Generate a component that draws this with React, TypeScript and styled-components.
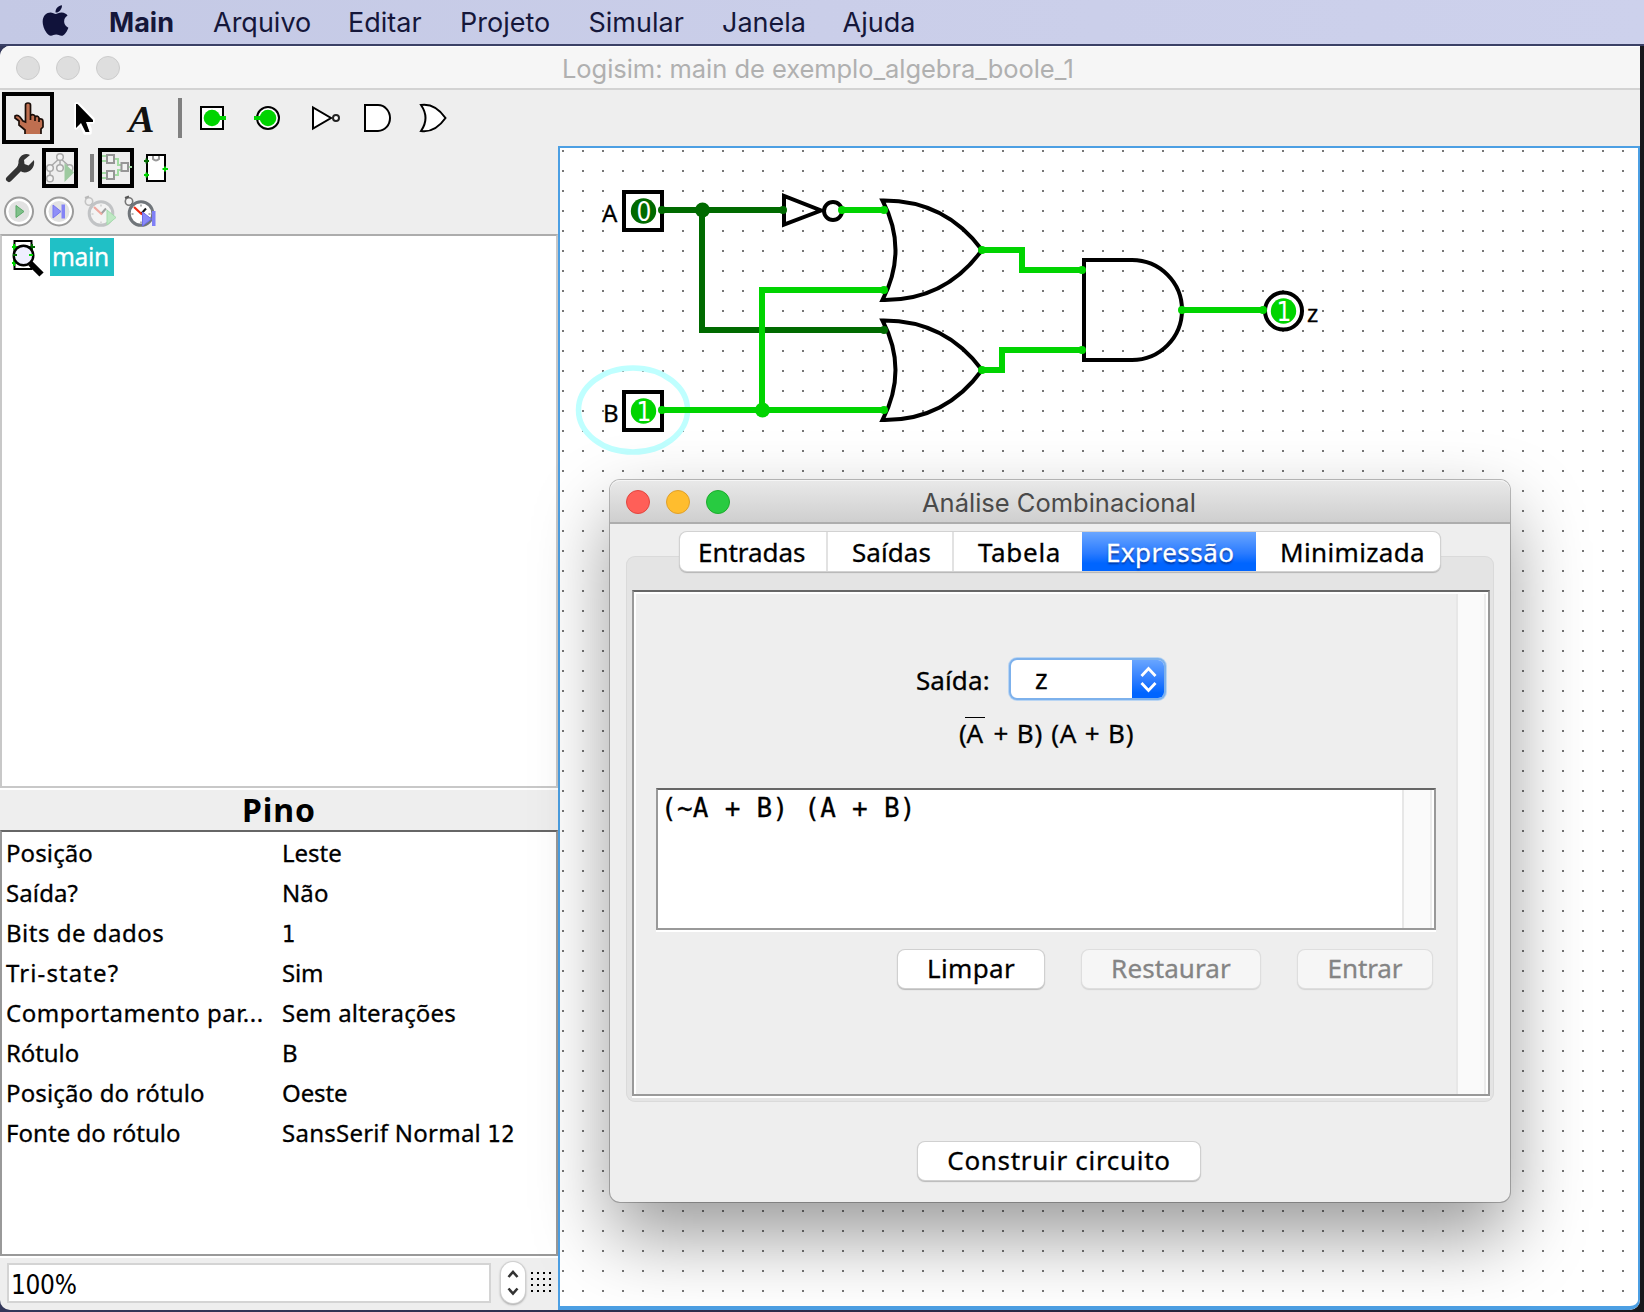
import React from "react";
import styled, { createGlobalStyle, css } from "styled-components";
import { FaApple } from "react-icons/fa";

const sans = `"Noto Sans", "Open Sans", sans-serif`;
const system = `Inter, Roboto, sans-serif`;
const condensed = `"DejaVu Sans Condensed", "DejaVu Sans", sans-serif`;

const GlobalStyle = createGlobalStyle`
  * { box-sizing: border-box; }
  html, body { margin: 0; padding: 0; }
  body { width: 1644px; height: 1312px; overflow: hidden; background: #1b1a24; }
`;

const Desktop = styled.div`
  position: relative;
  display: flex;
  flex-direction: column;
  width: 1644px;
  height: 1312px;
  overflow: hidden;
  background: linear-gradient(90deg, #33375a 0%, #2b2a48 60%, #1c1b26 97%, #17171b 100%);
  font-family: ${sans};
  color: #000;
  white-space: pre;
`;

/* ---------- menu bar ---------- */

const MenuBar = styled.nav`
  display: flex;
  align-items: center;
  height: 44px;
  flex: none;
  padding-left: 41px;
  padding-top: 1px;
  background: linear-gradient(90deg, #c4c9e5, #cacee9 50%, #cdd1ec);
  color: #15173a;
  font-family: ${system};
  font-size: 27px;
  line-height: 44px;
`;

const MenuShade = styled.i`
  flex: none;
  height: 2px;
  background: #3b4166;
`;

const AppleSlot = styled.span<{ $w: number }>`
  display: flex;
  width: ${(p) => p.$w}px;
  margin-top: -5px;
  margin-left: -3px;
  font-size: 35px;
  color: #10123a;
`;

const MenuItem = styled.span<{ $w: number; $bold?: boolean }>`
  width: ${(p) => p.$w}px;
  font-weight: ${(p) => (p.$bold ? 700 : 400)};
`;

/* ---------- main window ---------- */

const MainWindow = styled.section`
  display: flex;
  flex-direction: column;
  width: 1640px;
  height: 1264px;
  background: #eeeeee;
  border-radius: 10px 0 10px 10px;
  overflow: hidden;
`;

const MainTitle = styled.header`
  display: flex;
  align-items: center;
  flex: none;
  height: 44px;
  padding-left: 16px;
  background: #f6f6f6;
  border-bottom: 2px solid #d3d3d3;
  border-top: 1px solid #fff;
`;

const Light = styled.i<{ $fill: string; $edge: string }>`
  width: 24px;
  height: 24px;
  margin-right: 16px;
  border-radius: 50%;
  background: ${(p) => p.$fill};
  border: 1px solid ${(p) => p.$edge};
`;

const MainTitleText = styled.h1`
  flex: 1;
  margin: 0;
  padding: 2px 0 0 426px;
  font: 400 25.5px/40px ${system};
  letter-spacing: -0.05px;
  color: #b0b0b0;
`;

const ToolBar = styled.div`
  display: flex;
  flex: none;
  height: 56px;
`;

const Divider = styled.i<{ $w: number; $h: number; $left: number }>`
  display: block;
  width: ${(p) => p.$w}px;
  height: ${(p) => p.$h}px;
  padding-left: ${(p) => p.$left}px;
  margin-top: 8px;
  &::after { content: ""; display: block; width: 4px; height: 100%; background: #808080; }
`;

const Split = styled.div`
  display: flex;
  flex: 1;
  min-height: 0;
`;

const Explorer = styled.aside`
  display: flex;
  flex-direction: column;
  width: 558px;
`;

const SmallBar = styled.div`
  display: flex;
  height: 44px;
  flex: none;
`;

const Tree = styled.div`
  flex: none;
  height: 554px;
  border: 2px solid #c8c8c8;
  border-top-color: #acacac;
  background: #fff;
`;

const TreeNode = styled.div`
  display: flex;
  height: 42px;
`;

const TreeLabel = styled.span`
  height: 38px;
  margin-top: 2px;
  width: 64px;
  padding-left: 2px;
  background: #20c0c6;
  color: #fff;
  font-size: 24.5px;
  line-height: 38px;
  letter-spacing: -0.3px;
  -webkit-text-stroke: 0.3px;
`;

const AttrTitle = styled.h2`
  flex: none;
  height: 42px;
  margin: 0;
  border-top: 2px solid #fff;
  font: 700 32px/40px ${sans};
  letter-spacing: 1px;
  text-align: center;
`;

const AttrTable = styled.div`
  flex: none;
  height: 426px;
  padding-top: 1px;
  border: 2px solid #999;
  border-top-color: #666;
  background: #fff;
`;

const AttrRow = styled.div`
  display: grid;
  grid-template-columns: 276px 1fr;
  height: 40px;
  padding-left: 4px;
  font-size: 24px;
  line-height: 40px;
  -webkit-text-stroke: 0.3px;
`;

const Cell = styled.span<{ $ls: number }>`
  letter-spacing: ${(p) => p.$ls}px;
`;

const Digits = styled.span`
  font-family: ${condensed};
  font-stretch: condensed;
  font-size: 0.98em;
`;

const StatusBar = styled.footer`
  display: flex;
  flex: 1;
  align-items: flex-start;
  padding: 5px 0 0 7px;
  border-top: 2px solid #fff;
`;

const ZoomField = styled.div`
  width: 484px;
  height: 40px;
  border: 2px solid #d4d4d4;
  background: #fff;
  padding-left: 2px;
  font-size: 26.5px;
  line-height: 39px;
  letter-spacing: -0.3px;
`;

const Stepper = styled.div`
  width: 24px;
  height: 41px;
  margin: -1px 0 0 10px;
  border-radius: 12px;
  background: #fff;
  box-shadow: 0 0 0 1px #d0d0d0, 0 1px 2px 1px #aaa;
`;

const GridButton = styled.svg`
  margin: 9px 0 0 6px;
`;

const CanvasFrame = styled.main`
  flex: 1;
  border: 2px solid #4c9fe3;
  border-bottom-width: 4px;
  border-radius: 0 0 10px 0;
  background: #fff;
  svg { display: block; }
`;

/* ---------- analysis dialog ---------- */

const Dialog = styled.section`
  position: absolute;
  left: 610px;
  top: 480px;
  display: flex;
  flex-direction: column;
  width: 900px;
  height: 722px;
  border-radius: 10px;
  background: #eeeeee;
  box-shadow: 0 0 0 1px rgba(0, 0, 0, 0.25), 0 34px 76px rgba(0, 0, 0, 0.4);
`;

const DialogTitle = styled.header`
  display: flex;
  align-items: center;
  flex: none;
  height: 44px;
  padding: 2px 0 0 16px;
  border-radius: 10px 10px 0 0;
  border-bottom: 2px solid #adadad;
  background: linear-gradient(#e9e9e9, #cfcfcf);
  box-shadow: inset 0 1px 0 #f6f6f6;
`;

const DialogTitleText = styled.h2`
  margin: 0;
  padding: 1px 0 0 176px;
  font: 400 25.5px/38px ${system};
  color: #4a4a4a;
`;

const Tabs = styled.div`
  position: relative;
  z-index: 1;
  display: flex;
  flex: none;
  align-self: center;
  width: 760px;
  height: 39px;
  margin: 8px 0 1px;
  border-radius: 7px;
  background: #fff;
  box-shadow: 0 0 0 1px #d2d2d2, 0 1px 1px 1px #b4b4b4;
`;

const Tab = styled.span<{ $w: number; $pad: number; $ls: number; $active?: boolean }>`
  width: ${(p) => p.$w}px;
  padding-left: ${(p) => p.$pad}px;
  font-size: 26px;
  line-height: 40px;
  letter-spacing: ${(p) => p.$ls}px;
  -webkit-text-stroke: 0.3px;
  border-left: 2px solid #e2e2e2;
  &:first-child, &:last-child { border-left-color: transparent; }
  ${(p) =>
    p.$active &&
    css`
      border-left-color: transparent;
      color: #fff;
      background: linear-gradient(#6aa6ff, #2a7bff 55%, #0065ff 80%) border-box;
      text-shadow: 0 2px 2px rgba(0, 20, 90, 0.6);
    `}
`;

const TabPanel = styled.div`
  flex: none;
  height: 546px;
  margin: -16px 16px 0;
  padding: 34px 4px 0 6px;
  border-radius: 9px;
  background: #e4e4e4;
  box-shadow: inset 0 0 0 1px #dadada;
`;

const ScrollBox = styled.div`
  display: flex;
  height: 506px;
  border: 2px solid #999;
  border-top-color: #666;
  background: #eeeeee;
  box-shadow: inset 2px 2px 0 #fff, 0 2px 0 #fff;
`;

const Track = styled.i<{ $top: number }>`
  width: 32px;
  flex: none;
  margin-top: ${(p) => p.$top}px;
  border-left: 2px solid #e7e7e7;
  border-right: 2px solid #fff;
  background: linear-gradient(90deg, #fafafa 26px, #ececec 26px);
`;

const Form = styled.div`
  display: flex;
  flex-direction: column;
  flex: 1;
  padding: 66px 20px 0 22px;
`;

const OutputRow = styled.div`
  display: flex;
  height: 42px;
  padding-left: 260px;
  font-size: 26px;
  line-height: 44px;
  -webkit-text-stroke: 0.3px;
`;

const OutputLabel = styled.span`
  width: 93px;
  letter-spacing: 0.1px;
`;

const Combo = styled.div`
  display: flex;
  width: 157px;
  height: 42px;
  overflow: hidden;
  border: 2px solid #7db1ec;
  border-radius: 8px;
  background: #fff;
  box-shadow: 0 0 0 1px #b9d5f3;
  line-height: 38px;
`;

const ComboValue = styled.span`
  flex: 1;
  padding-left: 24px;
  font-size: 27px;
`;

const ComboArrows = styled.span`
  display: flex;
  width: 33px;
  margin: -1px -1px -1px 0;
  background: linear-gradient(#6ba7ff, #2a7bff 55%, #0065ff 85%);
`;

const Formula = styled.div`
  height: 74px;
  margin-top: 14px;
  padding-left: 303px;
  font-size: 26px;
  line-height: 39px;
  -webkit-text-stroke: 0.3px;
`;

const Term = styled.span<{ $gap?: number }>`
  letter-spacing: 0.8px;
  margin-left: ${(p) => p.$gap ?? 0}px;
`;

const Negated = styled.span`
  position: relative;
  margin-left: -1px;
  margin-right: 2px;
  &::before {
    content: "";
    position: absolute;
    left: -2px;
    top: 2px;
    width: 20px;
    height: 1px;
    background: #000;
  }
`;

const Editor = styled.div`
  display: flex;
  flex: none;
  height: 142px;
  border: 2px solid #999;
  border-top-color: #666;
  background: #fff;
  box-shadow: 0 2px 0 #fff;
`;

const EditorText = styled.div`
  flex: 1;
  padding-left: 3px;
  font: 26px/37px "DejaVu Sans Mono", "Liberation Mono", monospace;
  letter-spacing: 0.27px;
  -webkit-text-stroke: 0.3px;
`;

const Actions = styled.div`
  display: flex;
  justify-content: flex-end;
  gap: 38px;
  margin: 20px 4px 0 0;
`;

const Button = styled.button<{ $w: number; $ls: number }>`
  width: ${(p) => p.$w}px;
  height: 38px;
  padding: 0;
  border: 0;
  border-radius: 7px;
  background: #fff;
  box-shadow: 0 0 0 1px #d0d0d0, 0 1px 1px 1px #b8b8b8;
  font: 26px/36px ${sans};
  letter-spacing: ${(p) => p.$ls}px;
  -webkit-text-stroke: 0.3px;
  color: #000;
  span { display: block; margin-top: -3px; }
  &:disabled {
    color: #848484;
    background: #f6f6f6;
    box-shadow: 0 0 0 1px #dedede, 0 1px 1px 1px #d4d4d4;
  }
`;

const DialogFooter = styled.footer`
  display: flex;
  justify-content: center;
  padding: 40px 2px 0 0;
`;

/* ---------- toolbar drawings ---------- */

const ON = "#00d400";
const OFF = "#006a00";

const Tool = ({ selected, children }: { selected?: boolean; children: React.ReactNode }) => (
  <svg width="56" height="56" viewBox="0 0 56 56">
    {selected && <rect x="4" y="4" width="48" height="48" fill="none" stroke="#000" strokeWidth="4" />}
    {children}
  </svg>
);

const SmallTool = ({ selected, children }: { selected?: boolean; children: React.ReactNode }) => (
  <svg width="40" height="44" viewBox="0 0 40 44">
    {selected && <rect x="4" y="4" width="32" height="36" fill="none" stroke="#000" strokeWidth="4" />}
    {children}
  </svg>
);

const MainTools = () => (
  <ToolBar>
    <Tool selected>
      <path
        d="M25.500 32V15Q25.500 13 28 13Q30.500 13 30.500 15V25Q32 23.500 34.500 25L35.500 27Q37.500 25 39 27L40 29Q42.500 28.500 43 31V37L41 39V44H25V40L19 35V31L15 28V26Q17.500 24.500 20 27L23 31Z"
        fill="#bf6f50"
      />
      <path
        d="M25 44V40L19 35V31L15 28V26Q17.500 24.500 20 27L23 31L25.500 32V15Q25.500 13 28 13Q30.500 13 30.500 15V30M30.500 25.500Q33 23.500 35 26V31M35 27Q38 25 39 28V32M39 29Q43 28 43 32V37L41 39V44"
        fill="none"
        stroke="#1a0d08"
        strokeWidth="1.700"
      />
    </Tool>
    <Tool>
      <path
        d="M20 14V38L25 34L29 43H34V39L31 32H37V29L22 14Z"
        fill="#000"
        stroke="#fff"
        strokeWidth="3.500"
        strokeLinejoin="round"
      />
      <path d="M20 14V38L25 33L29.500 42H33.500L30 32H37V30L21.500 14Z" fill="#000" />
    </Tool>
    <Tool>
      <text x="29.500" y="42" textAnchor="middle" fontFamily="Liberation Serif, serif" fontStyle="italic" fontWeight="700" fontSize="38" fill="#111" textLength="26" lengthAdjust="spacingAndGlyphs">
        A
      </text>
    </Tool>
    <Divider $w={16} $h={40} $left={10} />
    <Tool>
      <rect x="17" y="17" width="22" height="22" fill="#fff" stroke="#000" strokeWidth="2" />
      <rect x="30" y="26" width="12" height="4" fill={ON} />
      <circle cx="28" cy="28" r="8.300" fill={ON} />
    </Tool>
    <Tool>
      <circle cx="28" cy="28" r="11" fill="#fff" stroke="#000" strokeWidth="2" />
      <rect x="14" y="26" width="10" height="4" fill={ON} />
      <circle cx="28" cy="28" r="8.300" fill={ON} />
    </Tool>
    <Tool>
      <path d="M17 17.500V38.500L35 28Z" fill="#fff" stroke="#000" strokeWidth="2" />
      <circle cx="40" cy="28" r="3" fill="#fff" stroke="#222" strokeWidth="2" />
    </Tool>
    <Tool>
      <path d="M13 15H26A12 13 0 0 1 26 41H13Z" fill="#fff" stroke="#000" strokeWidth="2" />
    </Tool>
    <Tool>
      <path d="M13 15Q27 13 37.500 28Q27 43 13 41Q22 28 13 15Z" fill="#fff" stroke="#000" strokeWidth="2" />
    </Tool>
  </ToolBar>
);

const ProjectTools = () => (
  <SmallBar>
    <SmallTool>
      <path d="M9 33L21 21" stroke="#333" strokeWidth="6" strokeLinecap="round" />
      <path
        d="M30 9C24 6 18 11 18.500 17L17 22L22 26C28 28 35.500 23 34 14L28.500 19.500L24.500 18L24 14Z"
        fill="#333"
      />
    </SmallTool>
    <SmallTool selected>
      <g fill="#f4f4f4" stroke="#aaa" strokeWidth="1.500">
        <path d="M20 12L10 21M20 12V21M20 12L30 21M10 22V33" />
        <circle cx="20" cy="11" r="3.300" />
        <circle cx="10" cy="22" r="3.300" />
        <circle cx="20" cy="22" r="3.300" />
        <circle cx="29.500" cy="22" r="3.300" />
        <circle cx="10" cy="32.500" r="3.300" />
      </g>
      <path d="M24.500 17V36L34 26.500Z" fill="#9dcaa0" />
    </SmallTool>
    <Divider $w={16} $h={28} $left={10} />
    <SmallTool selected>
      <path d="M6 10H11M6 15H11M6 27H11M6 32H11M18 13H22V19H26M18 29H22V24H26M33 21H36" stroke="#a3dba3" strokeWidth="2" fill="none" />
      <g fill="#f2f2f2" stroke="#969696" strokeWidth="2">
        <rect x="11" y="9" width="7" height="8" />
        <rect x="11" y="25" width="7" height="8" />
        <rect x="25.500" y="17" width="6.500" height="8" />
      </g>
    </SmallTool>
    <SmallTool>
      <rect x="11" y="9" width="18" height="26" fill="#fff" stroke="#000" strokeWidth="2" />
      <path d="M17 10V13Q20 16 23 13V10" fill="none" stroke="#999" strokeWidth="2" />
      <path d="M8 15H13M10.500 12.500V17.500" stroke={OFF} strokeWidth="2" />
      <path d="M8 29H13M10.500 26.500V31.500M26.500 23H32M29 20.500V25.500" stroke={ON} strokeWidth="2" />
    </SmallTool>
  </SmallBar>
);

const Dial = () => (
  <>
    <circle cx="19" cy="21.500" r="14" fill="#fff" stroke="#9c9c9c" strokeWidth="2" />
    <circle cx="19" cy="21.500" r="10.500" fill="#e2e2e2" />
  </>
);

const StopWatch = () => (
  <>
    <circle cx="9" cy="11.500" r="3.700" fill="#f2f2f2" stroke="#777" strokeWidth="1.600" />
    <path d="M5 8L9 6.500M11 14L14 16" stroke="#555" strokeWidth="2" />
    <circle cx="21" cy="23.500" r="11.800" fill="#fff" stroke="#70757a" strokeWidth="3" />
    <path d="M21 14.500V16.500M21 31.500V33.500M11.500 24H13.500M28.500 24H30.500" stroke="#999" strokeWidth="1.500" />
    <path d="M21 24L26 18.500" stroke="#111" strokeWidth="2" />
    <path d="M14 17L22 24.500" stroke="#f02a10" strokeWidth="2.200" />
  </>
);

const SimulationTools = () => (
  <SmallBar>
    <SmallTool>
      <Dial />
      <path d="M16 15.500V27.500L24 21.500Z" fill="#7fc08a" stroke="#5aa868" strokeWidth="1" />
    </SmallTool>
    <SmallTool>
      <Dial />
      <path d="M13 15V28L21 21.500Z" fill="#8f8ff8" stroke="#7676f0" strokeWidth="1" />
      <rect x="21.500" y="14.500" width="3.500" height="14" fill="#8484f6" />
    </SmallTool>
    <SmallTool>
      <g opacity="0.350">
        <StopWatch />
      </g>
      <path d="M27 20V35L36 27.500Z" fill="#bfe8c4" stroke="#a5dcac" strokeWidth="1" />
    </SmallTool>
    <SmallTool>
      <StopWatch />
      <path d="M22.500 22V36L31.500 29Z" fill="#8a8af8" stroke="#6c6cec" strokeWidth="1" />
      <rect x="32" y="21" width="3.500" height="15" fill="#7f7ff6" />
    </SmallTool>
  </SmallBar>
);

const CircuitIcon = () => (
  <svg width="48" height="42" viewBox="2 236 48 42">
    <rect x="14.500" y="241" width="17" height="28" fill="#fff" stroke="#000" strokeWidth="2" />
    <path d="M12 247H18M14 244V250M12 263H17M14 260V266" stroke={ON} strokeWidth="2" />
    <path d="M29 247H35M32 244V250" stroke={OFF} strokeWidth="2" />
    <circle cx="23.500" cy="255.500" r="9.800" fill="#efefff" stroke="#000" strokeWidth="2.400" />
    <path d="M29 255H33" stroke={ON} strokeWidth="2" />
    <path d="M13 255H17" stroke={OFF} strokeWidth="2" />
    <path d="M30.500 263.500L41.500 274.500" stroke="#000" strokeWidth="6" />
  </svg>
);

/* ---------- circuit ---------- */

const Label = styled.text`
  font-family: ${sans};
  font-size: 24px;
  fill: #000;
  stroke: #000;
  stroke-width: 0.3px;
`;

const PinValue = styled.text`
  font-family: ${condensed};
  font-stretch: condensed;
  font-size: 26px;
  fill: #fff;
  text-anchor: middle;
`;

const OrGate = ({ y }: { y: number }) => (
  <path
    d={`M882.500 ${y + 0.5}Q945 ${y} 982 ${y + 50}Q945 ${y + 101} 882.500 ${y + 100}Q908.500 ${y + 50} 882.500 ${y + 0.5}Z`}
    fill="none"
    stroke="#000"
    strokeWidth="4"
  />
);

const InputPin = ({ y, label, value, color }: { y: number; label: string; value: string; color: string }) => (
  <>
    <rect x="624" y={y - 18} width="38" height="38" fill="#fff" stroke="#000" strokeWidth="4" />
    <circle cx="643.500" cy={y + 1} r="12.700" fill={color} />
    <PinValue x="644" y={y + 11}>{value}</PinValue>
    <Label x={label === "A" ? 602 : 603} y={y + 12}>{label}</Label>
  </>
);

const wires: { d: string; on: boolean }[] = [
  { on: false, d: "M662 210H786M702 210V330H884" },
  { on: true, d: "M842 210H884" },
  { on: true, d: "M662 410H884M762 410V290H884" },
  { on: true, d: "M982 250H1022V270H1083" },
  { on: true, d: "M982 370H1002V350H1083" },
  { on: true, d: "M1181 310H1264" },
];

const ends: [number, number, boolean][] = [
  [662, 210, false], [783, 210, false], [842, 210, true], [884, 210, true], [884, 290, true],
  [884, 330, false], [662, 410, true], [884, 410, true], [982, 250, true], [982, 370, true],
  [1082, 270, true], [1082, 350, true], [1182, 310, true], [1263, 310, true],
];

const Circuit = () => (
  <svg width="1078" height="1158" viewBox="560 148 1078 1158">
    <defs>
      <pattern id="grid" x="562" y="150" width="20" height="20" patternUnits="userSpaceOnUse">
        <rect width="2" height="2" fill="#777" />
      </pattern>
    </defs>
    <rect x="560" y="148" width="1078" height="1158" fill="url(#grid)" />
    <ellipse cx="633" cy="410" rx="54.500" ry="42" fill="none" stroke="#bfffff" strokeWidth="5.500" />
    <InputPin y={210} label="A" value="0" color={OFF} />
    <InputPin y={410} label="B" value="1" color={ON} />
    <path d="M784 196V224.500L821 210.500Z" fill="none" stroke="#000" strokeWidth="4" />
    <circle cx="833" cy="211" r="9" fill="#fff" stroke="#000" strokeWidth="4" />
    <OrGate y={200} />
    <OrGate y={320} />
    <path d="M1084 260H1132A50 50 0 0 1 1132 360H1084Z" fill="none" stroke="#000" strokeWidth="4" />
    <circle cx="1283.500" cy="311" r="18.500" fill="#fff" stroke="#000" strokeWidth="4" />
    <circle cx="1283.500" cy="311" r="12.700" fill={ON} />
    <PinValue x="1284" y="321">1</PinValue>
    <Label x="1307" y="322">z</Label>
    {wires.map((w) => (
      <path key={w.d} d={w.d} fill="none" stroke={w.on ? ON : OFF} strokeWidth="6" />
    ))}
    {ends.map(([x, y, on]) => (
      <circle key={`${x}-${y}`} cx={x} cy={y} r="4" fill={on ? ON : OFF} />
    ))}
    <circle cx="702.500" cy="210" r="7.500" fill={OFF} />
    <circle cx="762.500" cy="410" r="7.500" fill={ON} />
  </svg>
);

/* ---------- data ---------- */

const menus: [string, number][] = [
  ["Arquivo", 135], ["Editar", 112], ["Projeto", 128.5], ["Simular", 133.5], ["Janela", 120.5], ["Ajuda", 100],
];

const attributes: { name: string; ls: number; value: React.ReactNode; vls: number }[] = [
  { name: "Posição", ls: 0.1, value: "Leste", vls: 0 },
  { name: "Saída?", ls: 0.1, value: "Não", vls: 0.1 },
  { name: "Bits de dados", ls: 0.5, value: <Digits>1</Digits>, vls: 0 },
  { name: "Tri-state?", ls: 1.1, value: "Sim", vls: -0.2 },
  { name: "Comportamento par...", ls: 0.52, value: "Sem alterações", vls: 0.2 },
  { name: "Rótulo", ls: -0.1, value: "B", vls: 0 },
  { name: "Posição do rótulo", ls: 0.15, value: "Oeste", vls: -0.1 },
  { name: "Fonte do rótulo", ls: 0.05, value: <>SansSerif Normal <Digits>12</Digits></>, vls: 0.25 },
];

const dots = [0, 6, 12, 18];

export default function App() {
  return (
    <Desktop>
      <GlobalStyle />
      <MenuBar>
        <AppleSlot $w={71}><FaApple /></AppleSlot>
        <MenuItem $w={104} $bold>Main</MenuItem>
        {menus.map(([name, w]) => (
          <MenuItem key={name} $w={w}>{name}</MenuItem>
        ))}
      </MenuBar>
      <MenuShade />

      <MainWindow>
        <MainTitle>
          <Light $fill="#dedede" $edge="#cccccc" />
          <Light $fill="#dedede" $edge="#cccccc" />
          <Light $fill="#dedede" $edge="#cccccc" />
          <MainTitleText>Logisim: main de exemplo_algebra_boole_1</MainTitleText>
        </MainTitle>
        <MainTools />
        <Split>
          <Explorer>
            <ProjectTools />
            <SimulationTools />
            <Tree>
              <TreeNode>
                <CircuitIcon />
                <TreeLabel>main</TreeLabel>
              </TreeNode>
            </Tree>
            <AttrTitle>Pino</AttrTitle>
            <AttrTable>
              {attributes.map((a) => (
                <AttrRow key={a.name}>
                  <Cell $ls={a.ls}>{a.name}</Cell>
                  <Cell $ls={a.vls}>{a.value}</Cell>
                </AttrRow>
              ))}
            </AttrTable>
            <StatusBar>
              <ZoomField><Digits>100%</Digits></ZoomField>
              <Stepper>
                <svg width="24" height="41" viewBox="0 0 24 41">
                  <path d="M7.500 15L12 10L16.500 15M7.500 26.500L12 31.500L16.500 26.500" fill="none" stroke="#333" strokeWidth="2.600" />
                </svg>
              </Stepper>
              <GridButton width="22" height="22" viewBox="0 0 22 22">
                {dots.map((x) => dots.map((y) => <rect key={`${x}-${y}`} x={x} y={y} width="2" height="2" />))}
              </GridButton>
            </StatusBar>
          </Explorer>
          <CanvasFrame>
            <Circuit />
          </CanvasFrame>
        </Split>
      </MainWindow>

      <Dialog>
        <DialogTitle>
          <Light $fill="#ff5f58" $edge="#e2463f" />
          <Light $fill="#ffbd2e" $edge="#e0a02a" />
          <Light $fill="#28cb41" $edge="#1bac2c" />
          <DialogTitleText>Análise Combinacional</DialogTitleText>
        </DialogTitle>
        <Tabs>
          <Tab $w={146} $pad={16} $ls={-0.05}>Entradas</Tab>
          <Tab $w={126} $pad={24} $ls={0.05}>Saídas</Tab>
          <Tab $w={130} $pad={24} $ls={0.7}>Tabela</Tab>
          <Tab $w={174} $pad={22} $ls={0.45} $active>Expressão</Tab>
          <Tab $w={184} $pad={22} $ls={0.35}>Minimizada</Tab>
        </Tabs>
        <TabPanel>
          <ScrollBox>
            <Form>
              <OutputRow>
                <OutputLabel>Saída:</OutputLabel>
                <Combo>
                  <ComboValue>z</ComboValue>
                  <ComboArrows>
                    <svg width="33" height="40" viewBox="0 0 33 40">
                      <path d="M9.500 17L16.500 9.500L23.500 17M9.500 24L16.500 31.500L23.500 24" fill="none" stroke="#fff" strokeWidth="2.800" />
                    </svg>
                  </ComboArrows>
                </Combo>
              </OutputRow>
              <Formula>
                <Term>(<Negated>A</Negated> + B)</Term>
                <Term $gap={8}>(A + B)</Term>
              </Formula>
              <Editor>
                <EditorText>(~A + B) (A + B)</EditorText>
                <Track $top={0} />
              </Editor>
              <Actions>
                <Button $w={146} $ls={0.35}><span>Limpar</span></Button>
                <Button $w={178} $ls={0.1} disabled><span>Restaurar</span></Button>
                <Button $w={134} $ls={-0.1} disabled><span>Entrar</span></Button>
              </Actions>
            </Form>
            <Track $top={2} />
          </ScrollBox>
        </TabPanel>
        <DialogFooter>
          <Button $w={282} $ls={0.7}><span>Construir circuito</span></Button>
        </DialogFooter>
      </Dialog>
    </Desktop>
  );
}
